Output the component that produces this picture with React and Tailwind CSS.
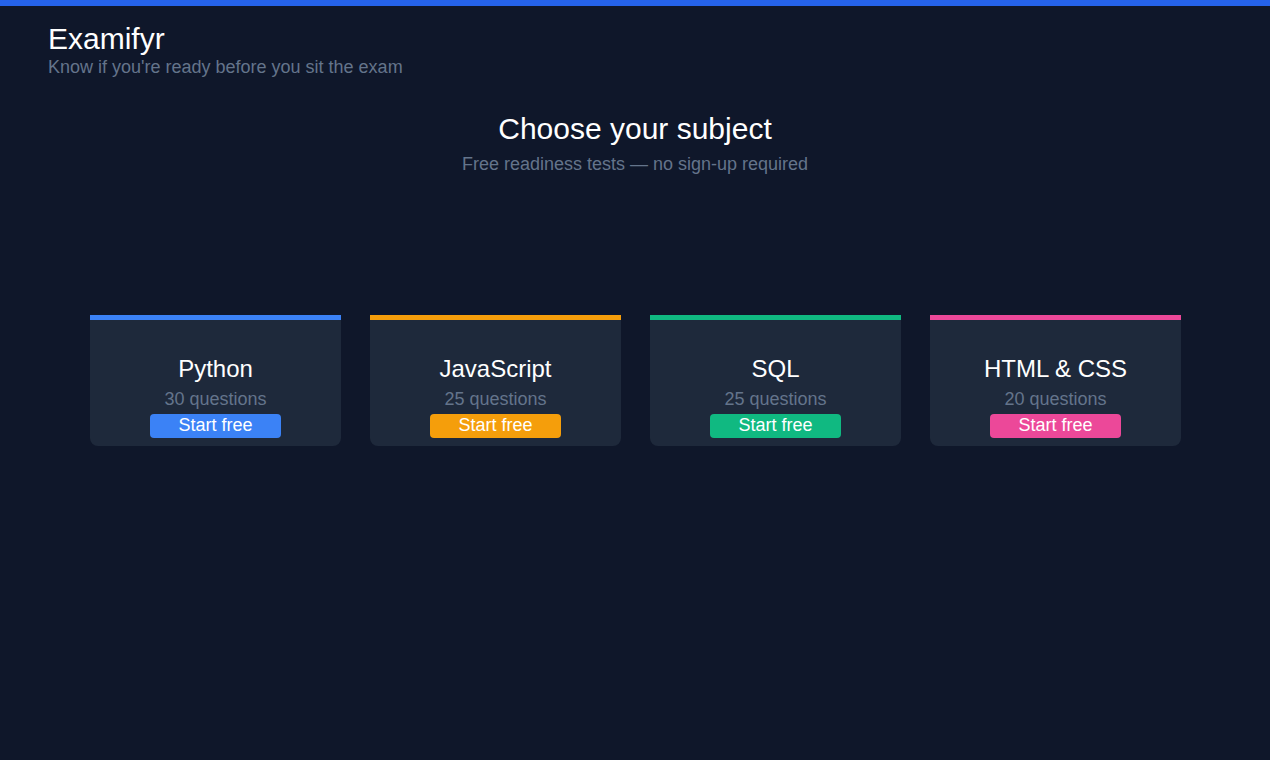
import React from "react";

const subjects = [
  { name: "Python", q: 30, bar: "bg-[#3b82f6]", btn: "bg-[#3b82f6]" },
  { name: "JavaScript", q: 25, bar: "bg-[#f59e0b]", btn: "bg-[#f59e0b]" },
  { name: "SQL", q: 25, bar: "bg-[#10b981]", btn: "bg-[#10b981]" },
  { name: "HTML & CSS", q: 20, bar: "bg-[#ec4899]", btn: "bg-[#ec4899]" },
];

export default function App() {
  return (
    <div
      className="min-h-[760px] w-full bg-[#0f172a] text-white"
      style={{ fontFamily: '"Liberation Sans", Arial, sans-serif' }}
    >
      <div className="h-[6px] bg-[#2563eb]" />
      <header className="pl-[48px] pt-[15px]">
        <div className="text-[30px] leading-[36px] text-white">Examifyr</div>
        <div className="mt-[1px] text-[18px] leading-[18px] text-[#64748b]">
          Know if you're ready before you sit the exam
        </div>
      </header>
      <section className="mt-[35px] flex flex-col items-center">
        <h1 className="text-[30px] leading-[36px] text-white">Choose your subject</h1>
        <p className="mt-[5px] text-[18px] leading-[24px] text-[#64748b]">
          Free readiness tests — no sign-up required
        </p>
      </section>
      <div className="mt-[139px] flex justify-center gap-[29px] pl-px">
        {subjects.map((s) => (
          <div key={s.name} className="w-[251px] rounded-b-lg bg-[#1e293b] flex flex-col items-center pb-[8px]">
            <div className={`h-[5px] w-full ${s.bar}`} />
            <div className="mt-[35px] text-[24px] leading-[28px] text-white">{s.name}</div>
            <div className="mt-[5px] text-[18px] leading-[22px] text-[#64748b]">{s.q} questions</div>
            <button
              className={`mt-[4px] h-[24px] w-[131px] rounded-[4px] ${s.btn} pb-[2px] text-[18px] leading-[22px] text-white`}
            >
              Start free
            </button>
          </div>
        ))}
      </div>
    </div>
  );
}
